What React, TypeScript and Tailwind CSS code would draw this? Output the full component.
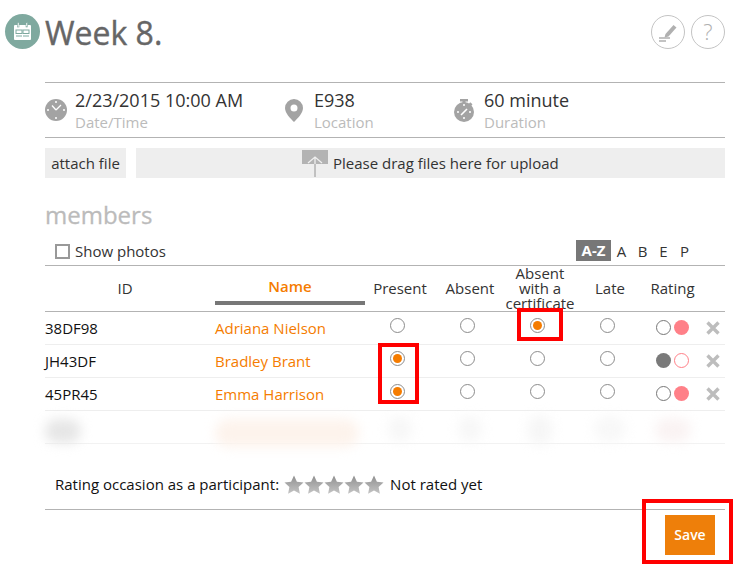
import { useId } from "react";

const gridCols = "grid grid-cols-[170px_150px_70px_70px_70px_70px_55px_25px]";

const members = [
  { id: "38DF98", name: "Adriana Nielson", status: 2, rating: "up" },
  { id: "JH43DF", name: "Bradley Brant", status: 0, rating: "down" },
  { id: "45PR45", name: "Emma Harrison", status: 0, rating: "up" },
];

function Radio({ checked }: { checked: boolean }) {
  return (
    <span className="w-[15px] h-[15px] rounded-full border border-[#8c8c8c] flex items-center justify-center bg-white">
      {checked && <span className="w-[9px] h-[9px] rounded-full bg-[#f57c00]" />}
    </span>
  );
}

function CalendarBadge() {
  return (
    <div className="w-[35px] h-[35px] rounded-full bg-[#7fa99f] flex items-center justify-center shrink-0">
      <svg width="19" height="19" viewBox="0 0 19 19">
        <rect x="1" y="3" width="17" height="15" rx="1" fill="#fff" />
        <rect x="4.5" y="0.5" width="1.5" height="4.5" fill="#fff" stroke="#7fa99f" strokeWidth="0.6" />
        <rect x="13" y="0.5" width="1.5" height="4.5" fill="#fff" stroke="#7fa99f" strokeWidth="0.6" />
        <rect x="3" y="8" width="6" height="3.5" fill="none" stroke="#7fa99f" strokeWidth="1" />
        <rect x="10" y="8" width="6" height="3.5" fill="none" stroke="#7fa99f" strokeWidth="1" />
        <path d="M3 14h6M10 14h6" stroke="#7fa99f" strokeWidth="1.2" />
      </svg>
    </div>
  );
}

function ClockIcon() {
  return (
    <svg width="22" height="22" viewBox="0 0 22 22" className="shrink-0">
      <circle cx="11" cy="11" r="11" fill="#a3a3a3" />
      <path d="M11 11 7 6.5M11 11l5-5" stroke="#fff" strokeWidth="1.3" fill="none" />
      <circle cx="11" cy="3" r="1" fill="#fff" />
      <circle cx="11" cy="19" r="1" fill="#fff" />
      <circle cx="3" cy="11" r="1" fill="#fff" />
      <circle cx="19" cy="11" r="1" fill="#fff" />
    </svg>
  );
}

function PinIcon() {
  return (
    <svg width="18" height="23" viewBox="0 0 18 23" className="shrink-0">
      <path
        fillRule="evenodd"
        d="M9 0a9 9 0 0 1 9 9c0 5-5 10-9 14C5 19 0 14 0 9a9 9 0 0 1 9-9Zm0 5.5a3.5 3.5 0 1 0 0 7 3.5 3.5 0 0 0 0-7Z"
        fill="#a3a3a3"
      />
    </svg>
  );
}

function TimerIcon() {
  return (
    <svg width="20" height="23" viewBox="0 0 20 23" className="shrink-0">
      <rect x="6" y="0" width="8" height="2.5" fill="#a3a3a3" />
      <rect x="8.5" y="2" width="3" height="3" fill="#a3a3a3" />
      <rect x="15" y="3.5" width="3" height="3" fill="#a3a3a3" transform="rotate(40 16 5)" />
      <circle cx="10" cy="13" r="10" fill="#a3a3a3" />
      <path d="m7 16 6-6" stroke="#fff" strokeWidth="1.6" />
      <circle cx="10" cy="6" r="1" fill="#fff" />
      <circle cx="16" cy="13" r="1" fill="#fff" />
      <circle cx="4" cy="13" r="1" fill="#fff" />
      <circle cx="10" cy="19" r="1" fill="#fff" />
    </svg>
  );
}

function EditIcon() {
  return (
    <svg width="22" height="22" viewBox="0 0 22 22">
      <path d="M8.5 13 16.5 4l3 2.5-8 9-4 1Z" fill="#b0b0b0" />
      <path d="M2 17h11M2 20h7" stroke="#b0b0b0" strokeWidth="1.3" />
    </svg>
  );
}

function UploadIcon() {
  return (
    <div className="relative w-[26px] h-[14px] bg-[#b3b3b3] self-start mt-[2px] shrink-0">
      <svg width="26" height="28" viewBox="0 0 26 28" className="absolute left-0 top-0">
        <path d="M13 27V7M6 13l7-6 7 6" stroke="#f0f0f0" strokeWidth="1.3" fill="none" />
        <path d="M13 27V14" stroke="#a8a8a8" strokeWidth="1.3" fill="none" />
      </svg>
    </div>
  );
}

function Star() {
  const gid = useId();
  return (
    <svg width="20" height="20" viewBox="0 0 20 20">
      <defs>
        <linearGradient id={gid} x1="0" y1="0" x2="0" y2="1">
          <stop offset="0" stopColor="#8f8f8f" />
          <stop offset="1" stopColor="#c4c4c4" />
        </linearGradient>
      </defs>
      <path d="M10 0.5l2.9 6.2 6.6.8-4.9 4.5 1.3 6.7L10 15.4l-5.9 3.3 1.3-6.7L.5 7.5l6.6-.8Z" fill={`url(#${gid})`} />
    </svg>
  );
}

function Rating({ kind }: { kind: string }) {
  return (
    <div className="flex items-center justify-center gap-[3px] pb-[2px]">
      {kind === "up" ? (
        <>
          <span className="w-[15px] h-[15px] rounded-full border border-[#777]" />
          <span className="w-[15px] h-[15px] rounded-full bg-[#ff8088]" />
        </>
      ) : (
        <>
          <span className="w-[15px] h-[15px] rounded-full bg-[#7a7a7a]" />
          <span className="w-[15px] h-[15px] rounded-full border border-[#ff8088]" />
        </>
      )}
    </div>
  );
}

function Remove() {
  return (
    <svg width="14" height="14" viewBox="0 0 14 14">
      <path d="M1.5 1.5l11 11M12.5 1.5l-11 11" stroke="#bdbdbd" strokeWidth="3.4" />
    </svg>
  );
}

function Smudge({ className }: { className: string }) {
  return <span className={`block rounded-full blur-[6px] ${className}`} />;
}

function InfoItem({ icon, title, sub, className }: { icon: React.ReactNode; title: string; sub: string; className: string }) {
  return (
    <div className={`flex items-center ${className}`}>
      {icon}
      <div>
        <div className="text-[18px] leading-[24px] text-[#333]">{title}</div>
        <div className="text-[15px] leading-[20px] text-[#bbb]">{sub}</div>
      </div>
    </div>
  );
}

export default function App() {
  return (
    <div className="relative w-[738px] h-[567px] overflow-hidden bg-white font-['Open_Sans',sans-serif] text-[#333]">
      <div className="pl-[5px] pr-[13px] pt-[14px]">
        {/* header */}
        <div className="flex items-center h-[35px]">
          <CalendarBadge />
          <h1 className="ml-[5px] pt-[1px] text-[32px] leading-[35px] text-[#666] [-webkit-text-stroke:0.4px_#666]">Week 8.</h1>
          <div className="ml-auto flex gap-[6px]">
            <div className="w-[34px] h-[34px] rounded-full border border-[#c4c4c4] flex items-center justify-center">
              <EditIcon />
            </div>
            <div className="w-[34px] h-[34px] rounded-full border border-[#c4c4c4] flex items-center justify-center text-[22px] font-light text-[#b0b0b0]">
              ?
            </div>
          </div>
        </div>

        <div className="ml-[40px] mt-[33px]">
          {/* info row */}
          <div className="flex items-center h-[56px] border-y border-[#b3b3b3]">
            <InfoItem icon={<ClockIcon />} title="2/23/2015 10:00 AM" sub="Date/Time" className="w-[240px] gap-[8px]" />
            <InfoItem icon={<PinIcon />} title="E938" sub="Location" className="w-[169px] gap-[11px]" />
            <InfoItem icon={<TimerIcon />} title="60 minute" sub="Duration" className="gap-[10px]" />
          </div>

          {/* attach */}
          <div className="flex gap-[10px] mt-[10px] h-[30px] text-[15px]">
            <div className="w-[81px] bg-[#eee] flex items-center justify-center">attach file</div>
            <div className="flex-1 bg-[#eee] flex items-center pl-[166px] gap-[5px]">
              <UploadIcon />
              <span>Please drag files here for upload</span>
            </div>
          </div>

          <h2 className="mt-[21px] text-[24px] leading-[32px] text-[#bbb] [-webkit-text-stroke:0.3px_#bbb]">members</h2>

          {/* filter row */}
          <div className="flex items-center h-[28px] mt-[6px] text-[15px]">
            <span className="ml-[10px] w-[15px] h-[15px] border-2 border-[#999] mr-[5px]" />
            <span>Show photos</span>
            <div className="ml-auto mr-[30px] flex items-center text-center">
              <span className="w-[35px] h-[21px] leading-[21px] -mt-[2px] bg-[#777] text-white font-bold">A-Z</span>
              <span className="w-[21px]">A</span>
              <span className="w-[21px]">B</span>
              <span className="w-[21px]">E</span>
              <span className="w-[21px]">P</span>
            </div>
          </div>

          {/* table head */}
          <div className={`${gridCols} h-[47px] border-y border-[#b3b3b3] text-[15px] leading-[15px] items-center text-center`}>
            <div className="w-[160px] pb-[2px]">ID</div>
            <div className="h-full flex flex-col justify-end">
              <div className="font-semibold text-[#f57c00] pb-[7px]">Name</div>
              <div className="h-[4px] mb-[7px] bg-[#777]" />
            </div>
            <div className="pb-[1px]">Present</div>
            <div className="pb-[1px]">Absent</div>
            <div className="pb-[1px]">Absent with a certificate</div>
            <div className="pb-[1px]">Late</div>
            <div className="pb-[1px]">Rating</div>
            <div />
          </div>

          {/* rows */}
          {members.map((m) => (
            <div key={m.id} className={`${gridCols} h-[33px] border-b border-[#eee] items-center text-[15px]`}>
              <div className="text-[#111] pt-[1px]">{m.id}</div>
              <div className="text-[#f57c00] pt-[1px]">{m.name}</div>
              {[0, 1, 2, 3].map((i) => (
                <div key={i} className="flex justify-center pb-[6px] pr-[5px]">
                  <Radio checked={m.status === i} />
                </div>
              ))}
              <Rating kind={m.rating} />
              <div className="flex justify-end pr-[5px]">
                <Remove />
              </div>
            </div>
          ))}

          {/* blurred row */}
          <div className={`${gridCols} h-[33px] border-b border-[#f2f2f2] items-center`}>
            <Smudge className="w-[36px] h-[24px] mt-[4px] bg-[#e6e6e6]" />
            <Smudge className="w-[144px] h-[28px] mt-[8px] bg-[#fdf3ec]" />
            <Smudge className="w-[24px] h-[26px] mx-auto bg-[#f7f7f7]" />
            <Smudge className="w-[24px] h-[26px] mx-auto bg-[#f7f7f7]" />
            <Smudge className="w-[24px] h-[30px] mx-auto mt-[2px] bg-[#f6f6f6]" />
            <Smudge className="w-[32px] h-[26px] mx-auto bg-[#f8f8f8]" />
            <Smudge className="w-[36px] h-[24px] mx-auto mt-[2px] bg-[#faf3f3]" />
            <div />
          </div>

          {/* occasion rating */}
          <div className="flex items-center h-[66px] border-b border-[#b3b3b3] pl-[10px] pt-[16px] text-[15px] text-[#111]">
            <span>Rating occasion as a participant:</span>
            <div className="flex ml-[5px] mr-[6px]">
              <Star />
              <Star />
              <Star />
              <Star />
              <Star />
            </div>
            <span>Not rated yet</span>
          </div>

          <div className="flex justify-end pr-[10px] mt-[5px]">
            <button className="w-[50px] h-[40px] pb-[2px] bg-[#ee7f0a] text-white text-[14px] font-semibold">Save</button>
          </div>
        </div>
      </div>

      {/* annotation boxes drawn over the screenshot */}
      <div className="absolute left-[517px] top-[308px] w-[46px] h-[33px] border-4 border-[#f00]" />
      <div className="absolute left-[378px] top-[343px] w-[41px] h-[61px] border-4 border-[#f00]" />
      <div className="absolute left-[642px] top-[499px] w-[91px] h-[65px] border-4 border-[#f00]" />
    </div>
  );
}
